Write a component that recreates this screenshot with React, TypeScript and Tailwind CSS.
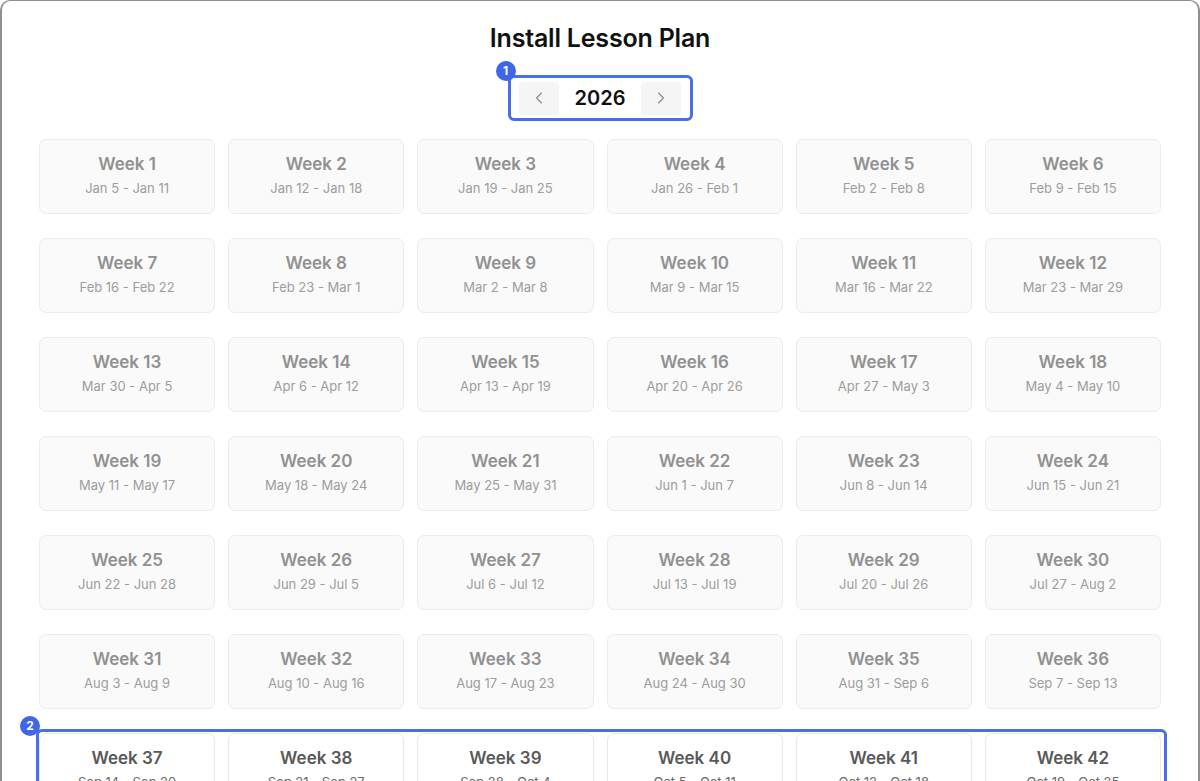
import React from 'react';
import { ChevronLeft, ChevronRight } from 'lucide-react';

const MONTHS = ['Jan', 'Feb', 'Mar', 'Apr', 'May', 'Jun', 'Jul', 'Aug', 'Sep', 'Oct', 'Nov', 'Dec'];

// 2026年の週を月曜始まりで作る
const fmt = (d: Date) => `${MONTHS[d.getMonth()]} ${d.getDate()}`;
const weeks = Array.from({ length: 52 }, (_, i) => {
  const start = new Date(2026, 0, 5 + i * 7);
  const end = new Date(2026, 0, 11 + i * 7);
  return { n: i + 1, range: `${fmt(start)} - ${fmt(end)}` };
});

const rows: (typeof weeks)[] = [];
for (let i = 0; i < 42; i += 6) rows.push(weeks.slice(i, i + 6));

function Badge({ n }: { n: number }) {
  return (
    <span className="w-[20px] h-[20px] rounded-full bg-[#3f65e8] text-white text-[12px] font-bold flex items-center justify-center leading-none">
      {n}
    </span>
  );
}

function WeekCard({ n, range, active }: { n: number; range: string; active?: boolean }) {
  return (
    <div
      className={`h-[75px] rounded-[7px] border flex flex-col items-center justify-center pb-[3px] ${
        active ? 'bg-white border-[#e8e8e8]' : 'bg-[#fafafa] border-[#ececec]'
      }`}
    >
      <div className={`text-[17px] font-semibold leading-[21px] ${active ? 'text-[#595959]' : 'text-[#919191]'}`}>
        Week {n}
      </div>
      <div className={`text-[13px] leading-[18px] mt-[4px] ${active ? 'text-[#6a6a6a]' : 'text-[#9d9d9d]'}`}>
        {range}
      </div>
    </div>
  );
}

export default function App() {
  return (
    <div
      className="w-[1200px] h-[781px] overflow-hidden bg-white border-x-2 border-t border-[#8f8f8f] rounded-t-[10px]"
      style={{ fontFamily: 'Inter, "Noto Sans", sans-serif' }}
    >
      <h1 className="text-center text-[25px] font-semibold text-[#111] pt-[21px] leading-[32px] tracking-[-0.2px]">
        Install Lesson Plan
      </h1>

      <div className="flex justify-center mt-[21px]">
        <div className="relative w-[185px] h-[46px] border-[3px] border-[#4a6ee8] rounded-[6px] flex items-center justify-between px-[8px]">
          <div className="absolute -left-[15px] -top-[17px]">
            <Badge n={1} />
          </div>
          <button className="w-[40px] h-[33px] rounded-[4px] bg-[#f5f5f5] flex items-center justify-center text-[#8a8a8a]">
            <ChevronLeft size={20} strokeWidth={1.3} />
          </button>
          <span className="text-[20px] font-semibold text-[#111]">2026</span>
          <button className="w-[40px] h-[33px] rounded-[4px] bg-[#f5f5f5] flex items-center justify-center text-[#8a8a8a]">
            <ChevronRight size={20} strokeWidth={1.3} />
          </button>
        </div>
      </div>

      <div className="px-[37px] mt-[18px] flex flex-col gap-[24px]">
        {rows.map((row, ri) => {
          const active = ri === 6;
          return (
            <div key={ri} className="relative grid grid-cols-6 gap-x-[13px]">
              {active && (
                <>
                  <div className="absolute -left-[3px] -right-[6px] -top-[4px] h-[100px] border-[3px] border-[#4a6ee8] rounded-[6px] pointer-events-none" />
                  <div className="absolute -left-[19px] -top-[17px]">
                    <Badge n={2} />
                  </div>
                </>
              )}
              {row.map((w) => (
                <WeekCard key={w.n} n={w.n} range={w.range} active={active} />
              ))}
            </div>
          );
        })}
      </div>
    </div>
  );
}
